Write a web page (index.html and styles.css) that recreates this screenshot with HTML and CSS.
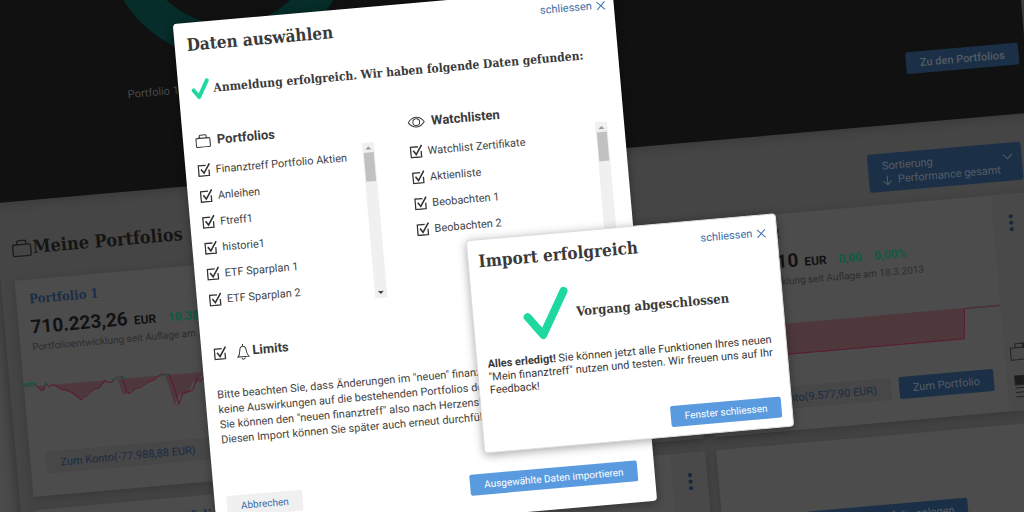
FILE: index.html
```html
<!DOCTYPE html>
<html lang="de">
<head>
<meta charset="utf-8">
<title>Mein finanztreff – Daten auswählen</title>
<link rel="stylesheet" href="styles.css">
</head>
<body>
<svg class="sprite" aria-hidden="true">
  <symbol id="case" viewBox="0 0 20 18"><path d="M2.500 5.500h15a1.500 1.500 0 0 1 1.500 1.500v8.500a1.500 1.500 0 0 1-1.500 1.500h-15A1.500 1.500 0 0 1 1 15.500V7a1.500 1.500 0 0 1 1.500-1.500zM5.500 5.500V3a1.500 1.500 0 0 1 1.500-1.500h6A1.500 1.500 0 0 1 14.500 3v2.500"/></symbol>
  <symbol id="eye" viewBox="0 0 18 12"><path d="M1 6c4.500-6.500 11.500-6.500 16 0-4.500 6.500-11.500 6.500-16 0z"/><circle cx="9" cy="6" r="3.400"/></symbol>
  <symbol id="bell" viewBox="0 0 13 17"><path d="M1 13.500c2-2 2-3.500 2.300-6.500C3.600 4.500 4.800 3 6.500 3s2.900 1.500 3.200 4c.3 3 .3 4.500 2.300 6.500zM6.500 3V.8M4.800 14.500c.3 2 3.100 2 3.400 0"/></symbol>
  <symbol id="cross" viewBox="0 0 10 10"><path d="M1 1l8 8M9 1l-8 8"/></symbol>
  <symbol id="dots" viewBox="0 0 6 18"><circle cx="3" cy="2.500" r="2.100"/><circle cx="3" cy="9" r="2.100"/><circle cx="3" cy="15.500" r="2.100"/></symbol>
</svg>
<div class="scene">
  <header class="hero">
    <div class="donut"></div>
    <span class="hero-label">Portfolio 1</span>
    <button class="btn btn-dim btn-strong">Zu den Portfolios</button>
  </header>

  <main>
    <div class="section-head">
      <h1><svg class="icon icon-case-lg"><use href="#case"/></svg>Meine Portfolios</h1>
      <button class="sort" aria-haspopup="listbox">
        <span class="sort-text">
          <span>Sortierung</span>
          <span class="sort-value"><svg class="icon arrow" viewBox="0 0 9 10"><path d="M4.500 0v9M.5 5.500l4 4 4-4"/></svg>Performance gesamt</span>
        </span>
        <svg class="icon chevron" viewBox="0 0 10 6"><path d="M.5.500l4.500 4.500L9.500.500"/></svg>
      </button>
    </div>

    <div class="cards">
      <article class="card">
        <div class="card-main">
          <h2>Portfolio 1</h2>
          <p class="value"><strong>710.223,26</strong><b>EUR</b><span class="gain">10.383,26</span></p>
          <p class="since">Portfolioentwicklung seit Auflage am 18.3.2013</p>
          <svg class="chart" viewBox="0 370 296 60">
            <path class="area" d="M13 386l4 4.400 3-1 1-3.400h8l9 6 8 3 9 8 13-9 8-1.500 7-6.500h11l3.500 14 3 2 6-4 5-.5 9-5 7-2 7-4h7l4 14 3 17 5-10 10-2.500 6-11 2 3 10-10.800z"/>
            <path class="area-up" d="M0 386l2-4h9l3 4z"/>
            <path class="down" d="M11 383l2 3 4 4.400 3-1 2-6 3 4.200 3-1.700 4 1 6 5 3-.3 5 3 3 1.500 5 5.500 2 2 3-3 3-1 7-5.500 6-1 6-7 3 2 4 .5 5-4.500h6l3 15 3 2 5-4 5-.5 9-5 7-2 7-5 8 1.300 4 14 3 16 5-10 10-2.500 5-11 3 3 8-8 30 1"/>
            <path class="up" d="M0 384.600l2-2.600 3 1 2-1 4 .8 2 2M21 387l1-4 2 3M88 386l7-1.500h6l1 3M138 387l3-2 4 1"/>
          </svg>
          <div class="actions">
            <button class="btn btn-ghost-dim">Zum Konto(-77.988,88 EUR)</button>
            <button class="btn btn-dim">Zum Portfolio</button>
          </div>
        </div>
        <aside class="strip"><svg class="dots"><use href="#dots"/></svg></aside>
      </article>
      <article class="card">
        <div class="card-main"></div>
        <aside class="strip"><svg class="dots"><use href="#dots"/></svg></aside>
      </article>
      <article class="card">
        <div class="card-main">
          <h2>Portfolio 2</h2>
          <p class="value"><strong>10.422,10</strong><b>EUR</b><span class="gain">0,00</span><span class="gain">0,00%</span></p>
          <p class="since">Portfolioentwicklung seit Auflage am 18.3.2013</p>
          <svg class="chart" viewBox="0 370 296 60">
            <path class="area" d="M0 389h260l-3 30.500H0z"/>
            <path class="down" d="M0 419.500h257L260 389.500h36"/>
            <path class="up faint" d="M262 389h34"/>
          </svg>
          <div class="actions">
            <button class="btn btn-ghost-dim">Zum Konto(9.577,90 EUR)</button>
            <button class="btn btn-dim">Zum Portfolio</button>
          </div>
        </div>
        <aside class="strip">
          <svg class="dots"><use href="#dots"/></svg>
          <svg class="icon strip-tools" viewBox="0 0 24 58"><path d="M0 6h19v12H0zM5 6V2h8v4"/><path class="solid" d="M12 6l4-8 4 8zM2 34h9v9H2z"/><path d="M13 35h9M13 39h9M13 43h9M2 46h20M2 50.500h20M2 55h20"/></svg>
        </aside>
      </article>
      <article class="card">
        <div class="card-main"><h2>Mein Finanztreff Portfolio</h2></div>
        <aside class="strip"><svg class="dots"><use href="#dots"/></svg></aside>
      </article>
      <article class="card">
        <div class="card-main"></div>
        <aside class="strip"><svg class="dots"><use href="#dots"/></svg></aside>
      </article>
      <article class="card card-new">
        <button class="btn btn-dim">Ein neues Portfolio anlegen</button>
      </article>
    </div>
  </main>

  <section class="modal modal-select" role="dialog" aria-labelledby="t1">
    <div class="modal-head">
      <h2 id="t1">Daten auswählen</h2>
      <button class="close">schliessen<svg class="icon cross"><use href="#cross"/></svg></button>
    </div>
    <div class="found">
      <svg class="tick" viewBox="0 0 20 22"><path d="M3 12l5 7L17 3"/></svg>
      <h3>Anmeldung erfolgreich. Wir haben folgende Daten gefunden:</h3>
    </div>
    <div class="columns">
      <div>
        <h4><svg class="icon case"><use href="#case"/></svg>Portfolios</h4>
        <div class="scroller">
          <div class="list">
            <label><input type="checkbox" checked>Finanztreff Portfolio Aktien</label>
            <label><input type="checkbox" checked>Anleihen</label>
            <label><input type="checkbox" checked>Ftreff1</label>
            <label><input type="checkbox" checked>historie1</label>
            <label><input type="checkbox" checked>ETF Sparplan 1</label>
            <label><input type="checkbox" checked>ETF Sparplan 2</label>
          </div>
          <div class="bar"><i class="bar-up"></i><i class="thumb"></i><i class="bar-down"></i></div>
        </div>
      </div>
      <div>
        <h4><svg class="icon eye"><use href="#eye"/></svg>Watchlisten</h4>
        <div class="scroller">
          <div class="list">
            <label><input type="checkbox" checked>Watchlist Zertifikate</label>
            <label><input type="checkbox" checked>Aktienliste</label>
            <label><input type="checkbox" checked>Beobachten 1</label>
            <label><input type="checkbox" checked>Beobachten 2</label>
          </div>
          <div class="bar"><i class="bar-up"></i><i class="thumb"></i><i class="bar-down"></i></div>
        </div>
      </div>
    </div>
    <label class="limits"><input type="checkbox" checked><svg class="icon bell"><use href="#bell"/></svg>Limits</label>
    <p class="note">Bitte beachten Sie, dass Änderungen im "neuen" finanztreff<br>keine Auswirkungen auf die bestehenden Portfolios dort haben.<br>Sie können den "neuen finanztreff" also nach Herzenslust testen.<br>Diesen Import können Sie später auch erneut durchführen.</p>
    <div class="modal-foot">
      <button class="btn btn-ghost">Abbrechen</button>
      <button class="btn btn-primary">Ausgewählte Daten importieren</button>
    </div>
  </section>

  <section class="modal modal-done" role="dialog" aria-labelledby="t2">
    <div class="modal-head">
      <h2 id="t2">Import erfolgreich</h2>
      <button class="close">schliessen<svg class="icon cross"><use href="#cross"/></svg></button>
    </div>
    <div class="success">
      <svg class="tick-lg" viewBox="0 0 48 53"><path d="M5 28l14 19L43 5"/></svg>
      <h3>Vorgang abgeschlossen</h3>
    </div>
    <p class="done-text"><b>Alles erledigt!</b> Sie können jetzt alle Funktionen Ihres neuen "Mein finanztreff" nutzen und testen. Wir freuen uns auf Ihr Feedback!</p>
    <div class="modal-foot"><button class="btn btn-primary">Fenster schliessen</button></div>
  </section>
</div>
</body>
</html>
```
FILE: styles.css
```css
* { box-sizing: border-box; margin: 0; }
html, body { height: 100%; }
body {
  overflow: hidden;
  background: #4c4c4c;
  color: #3a3a3a;
  font: 11px/15px Roboto, "Liberation Sans", sans-serif;
}
button { font: inherit; border: 0; cursor: pointer; white-space: nowrap; }
h1, h2, h3 { font-family: "Roboto Slab", "DejaVu Serif Condensed", "DejaVu Serif", serif; font-weight: 700; white-space: nowrap; }
.sprite { display: none; }
.icon { fill: none; stroke: currentColor; flex: none; }

.scene {
  position: relative;
  width: calc(100% + 17px);
  min-height: 680px;
  margin-left: -24px;
  background: #454545;
  box-shadow: 0 0 16px #2b2b2b;
  transform: rotate(-5deg);
  transform-origin: 24px 0;
}

/* dark header */
.hero {
  position: relative;
  display: flex;
  justify-content: space-between;
  align-items: flex-end;
  height: 202px;
  padding: 0 7px 49px 143px;
  background: #111;
  box-shadow: 0 2px 10px #393939;
}
.donut {
  position: absolute;
  left: 134px;
  top: -167px;
  width: 246px;
  height: 246px;
  border: 34px solid #062d29;
  border-radius: 50%;
}
.hero-label { color: #4a4a4a; margin-bottom: 40px; }
.btn { height: 21px; padding: 0 14px; border-radius: 2px; line-height: 21px; font-size: 10px; }
.btn-dim { height: 22px; background: #1b3046; color: #555c64; font-size: 11px; }
.btn-strong { font-weight: 500; }

.section-head {
  display: flex;
  justify-content: space-between;
  padding: 28px 13px 13px 14px;
}
h1 { display: flex; align-items: center; gap: 1px; font-size: 18px; line-height: 38px; color: #151515; }
.icon-case-lg { width: 20px; height: 18px; color: #1c1c1c; stroke-width: 1.4; }
.sort {
  display: flex;
  justify-content: space-between;
  width: 154px;
  height: 38px;
  padding: 6px 9px 4px 14px;
  border-radius: 2px;
  background: #1b3046;
  color: #555c64;
  line-height: 14px;
  text-align: left;
}
.sort-text { display: grid; }
.sort-value { display: flex; align-items: center; gap: 6px; }
.arrow { width: 9px; height: 10px; }
.chevron { width: 10px; height: 6px; margin-top: 5px; }

.cards {
  display: grid;
  grid-template-columns: repeat(3, minmax(0, 1fr));
  gap: 13px 11px;
  padding: 0 12px 0 14px;
}
.card { display: flex; min-height: 216px; background: #4c4c4c; box-shadow: 0 3px 8px #383838; }
.card-main { flex: 1; min-width: 0; padding: 11px 0 22px; }
.card h2 { padding-left: 13px; font-size: 13px; line-height: 18px; color: #1a2e47; }
.value { display: flex; align-items: baseline; margin-top: 7px; padding-left: 12px; line-height: 24px; color: #121212; font-size: 12px; white-space: nowrap; }
.value strong { margin-right: 6px; font-size: 19px; font-weight: 700; }
.value b { font-weight: 700; }
.gain { margin-left: 12px; color: #0f5a40; font-weight: 700; }
.since { padding-left: 12px; line-height: 12px; font-size: 10px; color: #2c2c2c; white-space: nowrap; }
.chart { display: block; width: 100%; height: 60px; margin-top: 17px; fill: none; }
.area { fill: #4e383c; }
.area-up { fill: #344b43; }
.down { stroke: #5c1a30; }
.up { stroke: #125a42; }
.faint { stroke: #3f3a3a; }
.actions { display: flex; justify-content: flex-end; gap: 8px; margin-top: 22px; padding-right: 13px; }
.btn-ghost-dim { height: 22px; background: #474747; color: #1a2b42; font-size: 11px; }
.strip { display: flex; flex-direction: column; align-items: center; width: 35px; padding-top: 20px; background: #494949; }
.dots { width: 6px; height: 18px; fill: #16293f; }
.strip-tools { width: 24px; height: 58px; margin-top: 110px; color: #222; overflow: visible; }
.solid { fill: #1c1c1c; }
.card-new { justify-content: center; align-items: flex-start; padding-top: 69px; }

/* dialogs */
.modal { position: absolute; background: #fff; border-radius: 4px; box-shadow: 0 2px 10px rgba(0, 0, 0, .35); }
.modal-select { left: 194px; top: 39px; width: 441px; padding: 10px 17px 21px 12px; }
.modal-done { left: 467px; top: 280px; width: 311px; padding: 9px 10px; border: 1px solid #ddd; }
.modal-head { display: flex; justify-content: space-between; align-items: flex-start; }
.modal-select .modal-head { margin-right: -9px; }
.modal-head h2 { font-size: 17px; line-height: 24px; }
.close { display: flex; align-items: center; gap: 4px; padding: 0; background: none; color: #3a6ea8; font-size: 11px; line-height: 18px; }
.cross { width: 10px; height: 10px; }
.modal h3 { font-size: 13px; line-height: 24px; }
.modal .found h3 { font-size: 12px; }
.found { display: flex; align-items: center; gap: 3px; margin-top: 21px; }
.tick, .tick-lg { flex: none; fill: none; stroke: #1fd8a0; stroke-linecap: round; stroke-linejoin: round; }
.tick { width: 20px; height: 22px; stroke-width: 4; }
.columns { display: grid; grid-template-columns: 178fr 199fr; gap: 35px; margin-top: 30px; }
h4 { display: flex; align-items: center; gap: 6px; font-size: 13px; line-height: 20px; }
.case { width: 16px; height: 14px; stroke-width: 1.4; }
.eye { width: 18px; height: 12px; }
.scroller { display: flex; justify-content: space-between; margin-top: 6px; }
.list label { display: flex; align-items: center; gap: 5px; height: 26px; color: #444; white-space: nowrap; }
input[type="checkbox"] {
  appearance: none;
  flex: none;
  width: 13px;
  height: 14px;
  margin: 0;
  background: url("data:image/svg+xml,%3Csvg xmlns='http://www.w3.org/2000/svg' viewBox='0 0 13 14' fill='none' stroke='%23333' stroke-width='1.300'%3E%3Cpath d='M8.500 2.600H1v10.400h10.400V7'/%3E%3Cpath d='M3.500 6.300l2.700 4L12.300 1' stroke-width='1.600'/%3E%3C/svg%3E") center / 100% 100% no-repeat;
}
.bar { display: flex; flex-direction: column; align-items: center; width: 12px; height: 156px; padding: 4px 0; background: #f0f0f0; }
.bar-up, .bar-down { border: 3px solid transparent; }
.bar-up { border-top: 0; border-bottom-color: #999; }
.bar-down { margin-top: auto; border-bottom: 0; border-top-color: #444; }
.thumb { width: 10px; height: 29px; margin-top: 3px; background: #c1c1c1; }
.limits { display: flex; align-items: center; margin-top: 31px; font-size: 13px; font-weight: 700; line-height: 20px; }
.bell { width: 13px; height: 17px; margin: 0 3px 0 10px; }
.note { margin-top: 24px; color: #444; white-space: nowrap; }
.modal-foot { display: flex; justify-content: space-between; margin-top: 49px; }
.btn-ghost { background: #f0f0f0; color: #3a6ea8; }
.btn-primary { background: #5a9be0; color: #fff; }
.success { display: flex; align-items: center; gap: 6px; margin: 20px 0 0 39px; }
.tick-lg { width: 48px; height: 53px; stroke-width: 8; }
.done-text { margin-top: 12px; line-height: 13px; }
.modal-done .modal-foot { justify-content: flex-end; margin-top: 25px; }
```
